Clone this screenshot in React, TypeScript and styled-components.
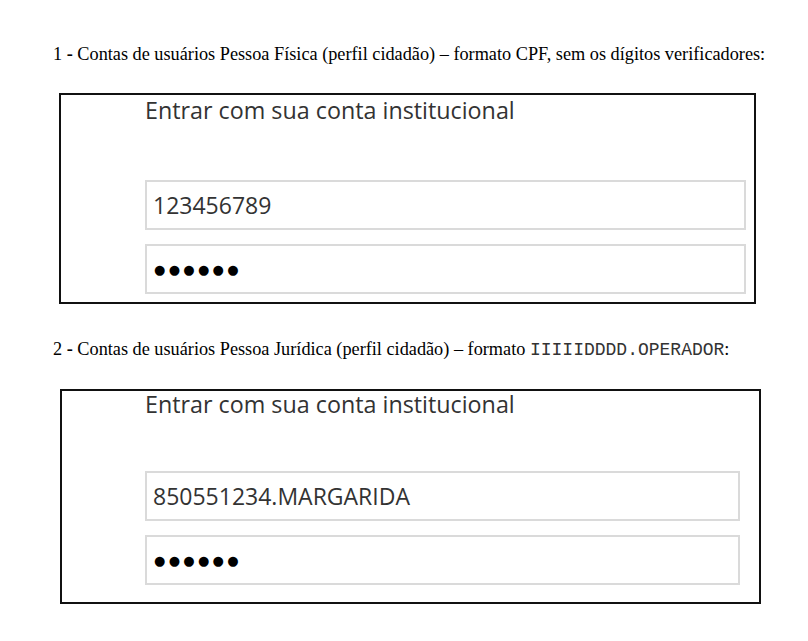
import styled, { createGlobalStyle } from "styled-components";

interface PanelProps {
  $width: number;
  $height: number;
  $left: number;
  $padLeft: number;
  $padRight: number;
  $titleTop: number;
}

interface LoginBox {
  width: number;
  height: number;
  left: number;
  padLeft: number;
  padRight: number;
  titleTop: number;
  fieldsTop: number;
  user: string;
}

const GlobalStyle = createGlobalStyle`
  html, body {
    margin: 0;
    padding: 0;
    background: #ffffff;
  }
`;

const Section = ({
  caption,
  box,
}: {
  caption: React.ReactNode;
  box: LoginBox;
}) => (
  <SectionWrap>
    <Caption>{caption}</Caption>
    <Panel
      $width={box.width}
      $height={box.height}
      $left={box.left}
      $padLeft={box.padLeft}
      $padRight={box.padRight}
      $titleTop={box.titleTop}
    >
      <PanelTitle>Entrar com sua conta institucional</PanelTitle>
      <Fields $top={box.fieldsTop}>
        <Field>{box.user}</Field>
        <Field>
          <Dots>●●●●●●</Dots>
        </Field>
      </Fields>
    </Panel>
  </SectionWrap>
);

const App = () => {
  return (
    <>
      <GlobalStyle />
      <Page>
        <Section
          caption={
            <>
              1 <b>-</b> Contas de usuários Pessoa Física (perfil cidadão) –
              formato CPF, sem os dígitos verificadores:
            </>
          }
          box={{
            width: 697,
            height: 211,
            left: 6,
            padLeft: 84,
            padRight: 8,
            titleTop: 3,
            fieldsTop: 58,
            user: "123456789",
          }}
        />
        <Section
          caption={
            <>
              2 <b>-</b> Contas de usuários Pessoa Jurídica (perfil cidadão) –
              formato <Mono>IIIIIDDDD.OPERADOR</Mono>:
            </>
          }
          box={{
            width: 701,
            height: 215,
            left: 7,
            padLeft: 83,
            padRight: 19,
            titleTop: 1,
            fieldsTop: 55,
            user: "850551234.MARGARIDA",
          }}
        />
      </Page>
    </>
  );
};

const Page = styled.div`
  display: flex;
  flex-direction: column;
  gap: 34px;
  padding: 43px 0 0 53px;
`;

const SectionWrap = styled.section`
  display: flex;
  flex-direction: column;
  gap: 28px;
`;

const Caption = styled.p`
  margin: 0;
  font-family: "Liberation Serif", "Times New Roman", serif;
  font-size: 18.25px;
  line-height: 22px;
  color: #000;
  white-space: nowrap;

  b {
    font-weight: bold;
  }
`;

const Mono = styled.span`
  font-family: "Liberation Mono", "Courier New", monospace;
  font-size: 18px;
  color: #333;
`;

const Panel = styled.div<PanelProps>`
  box-sizing: border-box;
  width: ${({ $width }) => $width}px;
  height: ${({ $height }) => $height}px;
  margin-left: ${({ $left }) => $left}px;
  border: 2px solid #111;
  padding: ${({ $titleTop }) => $titleTop}px
    ${({ $padRight }) => $padRight}px 0 ${({ $padLeft }) => $padLeft}px;
  display: flex;
  flex-direction: column;
`;

const PanelTitle = styled.div`
  font-family: "Open Sans", "Noto Sans", sans-serif;
  font-size: 23.3px;
  line-height: 24px;
  color: #333;
  white-space: nowrap;
`;

const Fields = styled.div<{ $top: number }>`
  display: flex;
  flex-direction: column;
  gap: 14px;
  margin-top: ${({ $top }) => $top}px;
`;

const Field = styled.div`
  box-sizing: border-box;
  height: 50px;
  border: 2px solid #dadada;
  padding: 0 0 0 6px;
  display: flex;
  align-items: center;
  font-family: "Open Sans", "Noto Sans", sans-serif;
  font-size: 23px;
  color: #333;
`;

const Dots = styled.span`
  margin-left: 1px;
  font-family: "DejaVu Sans", sans-serif;
  font-size: 13px;
  letter-spacing: 3.3px;
  color: #000;
`;

export default App;
